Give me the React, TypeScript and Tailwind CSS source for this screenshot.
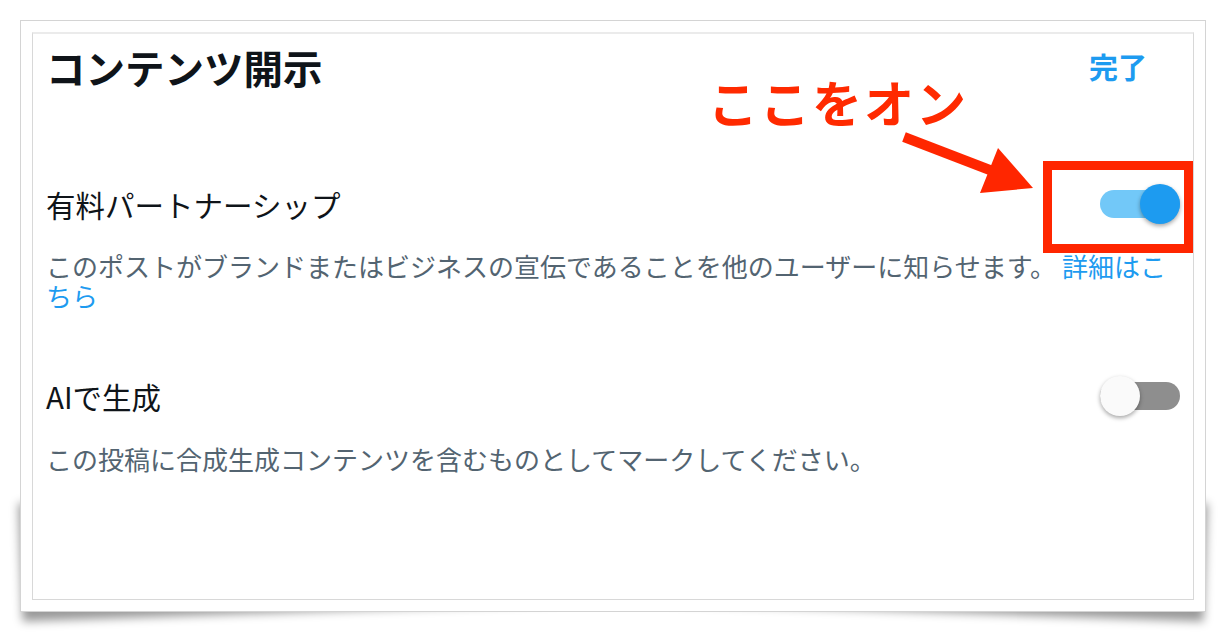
import React, { useState } from 'react';

const jp = "font-['Noto_Sans_CJK_JP','Noto_Sans',sans-serif]";

type ToggleProps = { on: boolean; onChange: () => void };

const Toggle: React.FC<ToggleProps> = ({ on, onChange }) => (
    <button
        onClick={onChange}
        className="relative w-[80px] h-[40px] shrink-0"
        aria-pressed={on}
    >
        <span
            className={`absolute left-0 right-0 top-[6px] h-[28px] rounded-full ${on ? 'bg-[#72c8f8]' : 'bg-[#8e8e8e]'}`}
        />
        <span
            className={`absolute top-0 w-[40px] h-[40px] rounded-full shadow-[0_2px_4px_rgba(0,0,0,0.35)] ${on ? 'left-[40px] bg-[#1d9bf0]' : 'left-0 bg-[#fafafa]'}`}
        />
    </button>
);

const App: React.FC = () => {
    const [paid, setPaid] = useState(true);
    const [ai, setAi] = useState(false);

    return (
        <div className={`relative w-[1226px] h-[632px] bg-white overflow-hidden ${jp}`}>
            <div className="relative isolate ml-[20px] mt-[20px] w-[1186px] h-[592px]">
                {/* lifted-corner shadows behind the card */}
                <div className="absolute -z-10 left-[4px] bottom-[10px] w-[45%] h-[20%] rotate-[-2deg] shadow-[-4px_10px_10px_rgba(0,0,0,0.4)]" />
                <div className="absolute -z-10 right-[4px] bottom-[10px] w-[45%] h-[20%] rotate-[2deg] shadow-[4px_10px_10px_rgba(0,0,0,0.4)]" />

                <div className="h-full bg-white border border-[#d4d4d4] p-[11px]">
                    <div className="h-full border border-[#d8d8d8] border-t-2 border-t-[#ebebeb] px-[13px]">
                        <div className="flex items-center justify-between h-[66px]">
                            <h1 className="text-[39.5px] leading-[48px] font-bold text-[#0f1419]">コンテンツ開示</h1>
                            <button className="text-[29px] font-bold text-[#1d9bf0] mr-[33px]">完了</button>
                        </div>

                        <div className="flex items-center justify-between h-[60px] mt-[74px]">
                            <span className="text-[29.5px] text-[#0f1419]">有料パートナーシップ</span>
                            <Toggle on={paid} onChange={() => setPaid(!paid)} />
                        </div>
                        <p className="mt-[17px] text-[26px] leading-[30px] text-[#536471]">
                            このポストがブランドまたはビジネスの宣伝であることを他のユーザーに知らせます。{' '}
                            <a className="text-[#1d9bf0]">詳細はこちら</a>
                        </p>

                        <div className="flex items-center justify-between h-[60px] mt-[55px]">
                            <span className="text-[29.5px] text-[#0f1419]">AIで生成</span>
                            <Toggle on={ai} onChange={() => setAi(!ai)} />
                        </div>
                        <p className="mt-[18px] text-[26px] leading-[30px] text-[#536471]">
                            この投稿に合成生成コンテンツを含むものとしてマークしてください。
                        </p>
                    </div>
                </div>
            </div>

            {/* annotation overlay */}
            <div className="absolute left-[708px] top-[76px] text-[50px] leading-[50px] font-bold text-[#ff2a00] tracking-[2px]">
                ここをオン
            </div>
            <svg className="absolute left-0 top-0 pointer-events-none" width="1226" height="632">
                <line x1="904" y1="137" x2="995" y2="172" stroke="#ff2600" strokeWidth="10" />
                <polygon points="998,148 980,193 1033,188" fill="#ff2600" />
            </svg>
            <div className="absolute left-[1043px] top-[161px] w-[150px] h-[92px] border-[9px] border-[#ff2600]" />
        </div>
    );
};

export default App;
